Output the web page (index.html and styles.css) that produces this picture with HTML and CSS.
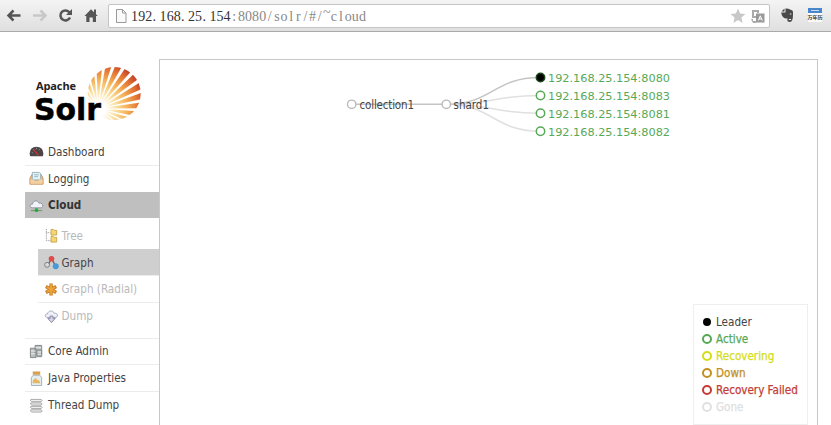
FILE: index.html
```html
<!DOCTYPE html>
<html lang="en">
<head>
<meta charset="utf-8">
<title>Solr Admin</title>
<link rel="stylesheet" href="styles.css">
</head>
<body>
<header class="toolbar">
  <svg class="nav" width="100" height="31" viewBox="0 0 100 31" fill="none" stroke="#555" stroke-width="2.5">
    <path d="M20.500 15.500H9M13.500 10.500L8.500 15.500L13.500 20.500"/>
    <path stroke="#c8c8c8" d="M33 15.500H45M40.500 10.500L45.500 15.500L40.500 20.500"/>
    <path d="M69.500 12.500A5 5 0 1 0 70 17.500"/>
    <path fill="#555" stroke="none" d="M72 9v6h-6z"/>
    <path fill="#555" stroke="none" d="M84.500 16L91 9.300L94 12.300V9.500H96V14.300L97.800 16H96V22H92.800V17.500H89.500V22H86.300V16z"/>
  </svg>
  <div class="address">
    <svg width="12" height="16" viewBox="0 0 12 16" fill="#fafafa" stroke="#999"><path d="M1.500 1.500H7.500L11 5V14.500H1.500zM7.500 1.500V5H11"/></svg>
    <svg class="url" width="240" height="22" viewBox="0 0 240 22"><text y="16"><tspan class="domain" x="3.6 10.7 17.8 23.3 32 39.2 46.3 51.8 60.5 67.6 73.2 81.9 89 96.1">192.168.25.154</tspan><tspan x="103.2 110.4 117.5 124.6 131.7 138.8 146 153.1 160.2 167.3 174.4 181.6 188.7">:8080/solr/#/</tspan><tspan x="195.8" y="12">~</tspan><tspan y="16" x="202.9 210 217.2 224.3 231.4">cloud</tspan></text></svg>
    <svg class="tools" width="36" height="18" viewBox="0 0 36 18">
      <path fill="#c8c8c8" d="M8 1.500L10.100 6.500L15.500 7L11.400 10.600L12.600 16L8 13.100L3.400 16L4.600 10.600L.5 7L5.900 6.500z"/>
      <path fill="#aaa" d="M22 3h7v3h-2V5h-3v4h2v2h-4zM21 12h2v2h3v2h-3z"/>
      <rect x="26" y="6.500" width="8.500" height="9" fill="#999"/><path d="M28.300 13.500L30.300 8.800L32.300 13.500M29 12h2.600" fill="none" stroke="#fff"/>
    </svg>
  </div>
  <svg class="ext" width="50" height="31" viewBox="0 0 50 31">
    <path fill="#4a4a4a" d="M3.500 11.500L6.500 8.500V11.500zM7.500 8.500Q11 8 13 10Q15.500 9.800 15 14.500Q15 22 12 22Q8.500 22 9.500 18.500Q4 19 3.200 12.500H7.500z"/>
    <path d="M10.800 19.500h2.300M11.800 14h1.600" stroke="#eee"/>
    <rect x="30" y="8" width="14" height="14" fill="#fafafa"/><path fill="#4a86cc" d="M30 8h14v5H30z"/><path d="M33 10.500h8" stroke="#c4dcf4"/>
    <text x="29.500" y="19" class="calendar">万年历</text>
  </svg>
</header>
<div class="page">
  <aside>
    <svg class="logo" width="134" height="79" viewBox="25 59 134 79">
      <defs>
        <radialGradient id="sun" gradientUnits="userSpaceOnUse" cx="98" cy="109" r="51"><stop offset=".14" stop-color="#fff"/><stop offset=".35" stop-color="#fbe0a0"/><stop offset=".58" stop-color="#f4b057"/><stop offset=".8" stop-color="#e27232"/><stop offset="1" stop-color="#b93127"/></radialGradient>
        <clipPath id="disc"><circle cx="114.200" cy="93.500" r="26.500"/></clipPath>
      </defs>
      <g clip-path="url(#disc)"><circle cx="98" cy="108.500" r="30" fill="none" stroke="url(#sun)" stroke-width="60" pathLength="360" stroke-dasharray="7.700 4.300" transform="rotate(-8 98 108.500)"/></g>
      <text x="36" y="90" class="apache" textLength="40">Apache</text>
      <text x="34" y="119.500" class="solr" textLength="67" lengthAdjust="spacingAndGlyphs">Solr</text>
    </svg>
    <nav>
      <a class="row first"><svg viewBox="0 0 16 16"><path fill="#4b4547" d="M.7 10Q1 3 8 3T15.300 10Q15.300 13 14 13H2Q.7 13 .7 10z"/><path d="M3 9l1 .4M4.500 5.500l1 1M8 4v1.500M11.500 5.500l-1 1" stroke="#999"/><path d="M5 6l5 6" stroke="#d33030" stroke-width="1.300"/></svg>Dashboard</a>
      <a class="row"><svg viewBox="0 0 16 16"><path fill="#edc38e" stroke="#c28b58" d="M1 8L3 4H13L15 8V14H1z"/><path fill="#e6f1f5" stroke="#94adb8" d="M3.500 1.500H11L12.500 3V9.500H3.500z"/><path d="M5.500 4h5M5.500 6h4" stroke="#91b5bf"/><path fill="#f3d1a0" d="M1.500 9H5L6 11H10L11 9H14.500V13.500H1.500z"/></svg>Logging</a>
      <a class="row active"><svg viewBox="0 0 16 16"><path d="M8 8v6M2 13.500h12" stroke="#65965d"/><path fill="#f2f3f8" stroke="#8d91a0" d="M3.500 10.500C0 10 .8 6 3.600 6.600C4.500 2 10 2.200 10.600 5.500C15 4.500 16.300 9.800 12.600 10.500z"/><circle cx="8" cy="13" r="2" fill="#2da746"/></svg>Cloud</a>
      <div class="submenu">
        <a class="row"><svg viewBox="0 0 16 16"><path d="M2.500 1v12.500H7M2.500 5H7" fill="none" stroke="#888" stroke-dasharray="1 1"/><path fill="#f4d675" stroke="#c9a64a" d="M7.500 1.500H10L11 2.500H13.500V7.500H7.500zM7.500 9H10L11 10H13.500V15H7.500z"/></svg>Tree</a>
        <a class="row chosen"><svg viewBox="0 0 16 16"><path d="M4 11L8 4L12 11" fill="none" stroke="#666" stroke-width="1.500"/><circle cx="8" cy="4" r="3" fill="#dd4b4b"/><circle cx="3.300" cy="10.500" r="2.600" fill="#ddd" stroke="#777"/><circle cx="12.500" cy="12" r="3.200" fill="#459bd9"/></svg>Graph</a>
        <a class="row"><svg viewBox="0 0 16 16"><path d="M7.500 1.500v13M2 4.800l11 6.400M2 11.200l11-6.400" stroke="#c57b24" stroke-width="3.600"/><path d="M7.500 2.500v11M3 5.300l9 5.400M3 10.700l9-5.400" stroke="#f0a339" stroke-width="2"/></svg>Graph (Radial)</a>
        <a class="row"><svg viewBox="0 0 16 16"><path fill="#eeeff7" stroke="#a5a7bd" d="M3.500 9C.2 8.700 1 4.800 3.600 5.300C4.500 1.200 10 1.200 10.700 4.500C14.900 3.800 15.800 8.400 12.600 9z"/><path fill="#d4d6e8" stroke="#8588a5" d="M6.500 7.500h3V10H12L8 14.500L4 10h2.500z"/></svg>Dump</a>
      </div>
      <a class="row"><svg viewBox="0 0 16 16"><path fill="#b8bdbd" stroke="#7e8585" d="M6.500 1.500h7v10h-7zM1.500 4.500h6v10h-6zM8.500 6.500h5v7h-5z"/><path d="M2 7.500h5M2 10.500h5M7 4h6M9 8.500h4M9 11h4" stroke="#f1f3f3"/></svg>Core Admin</a>
      <a class="row"><svg viewBox="0 0 16 16"><path fill="#e4edf1" stroke="#9eafb7" d="M4.500 4.500h7L13.500 7V15.500h-11V7z"/><path fill="#d8a052" d="M4 .5h8v3.500H4z"/><path fill="#e8b65c" d="M4 13V10l3-2.500 2 2 2 .5 1 3z"/></svg>Java Properties</a>
      <a class="row"><svg viewBox="0 0 16 16"><g fill="#eee" stroke="#909090"><path d="M2 1.500h11l1 1.200-1 1.200H3L1.500 2.700zM2 5.200h11l1 1.200-1 1.200H3L1.500 6.400zM2 8.900h11l1 1.200-1 1.200H3L1.500 10.100zM2 12.600h11l1 1.200-1 1.200H3L1.500 13.800z" stroke-width=".8"/></g></svg>Thread Dump</a>
    </nav>
  </aside>
  <main>
    <svg class="graph" width="657" height="240" viewBox="160 60 657 240">
      <g fill="none" stroke="#e0e0e0" stroke-width="1.500">
        <path d="M446 104.300C493 104.300 493 95.500 540 95.500M446 104.300C493 104.300 493 113.300 540 113.300M446 104.300C493 104.300 493 131.200 540 131.200"/>
        <path stroke="#c4c4c4" d="M352 104.300H446M446 104.300C493 104.300 493 77.500 540 77.500"/>
      </g>
      <g fill="#fff" stroke="#bbb" stroke-width="1.400"><circle cx="351.700" cy="104.300" r="4.200"/><circle cx="446.300" cy="104.300" r="4.200"/></g>
      <g fill="#fff" stroke="#57a957" stroke-width="1.500"><circle cx="540.500" cy="77.500" r="4.200" fill="#000" stroke="#1c471c"/><circle cx="540.500" cy="95.500" r="4.200"/><circle cx="540.500" cy="113.300" r="4.200"/><circle cx="540.500" cy="131.200" r="4.200"/></g>
      <g class="name"><text x="359.500" y="108.500" textLength="54.500">collection1</text><text x="453.500" y="108.500" textLength="35.500">shard1</text></g>
      <g class="host"><text x="548" y="82" textLength="122">192.168.25.154:8080</text><text x="548" y="100" textLength="122">192.168.25.154:8083</text><text x="548" y="117.800" textLength="122">192.168.25.154:8081</text><text x="548" y="135.700" textLength="122">192.168.25.154:8082</text></g>
    </svg>
    <ul class="legend">
      <li class="leader"><i></i>Leader</li><li class="up"><i></i>Active</li><li class="recovering"><i></i>Recovering</li><li class="down"><i></i>Down</li><li class="failed"><i></i>Recovery Failed</li><li class="gone"><i></i>Gone</li>
    </ul>
  </main>
</div>
</body>
</html>
```
FILE: styles.css
```css
* { box-sizing: border-box; }
body { margin: 0; height: 425px; overflow: hidden; background: #fff; color: #444; font: 11.6px "DejaVu Sans Condensed", "DejaVu Sans", sans-serif; }
svg { display: block; flex: none; }
.toolbar { display: flex; height: 32px; background: linear-gradient(#f4f4f4, #dfdfdf); border-bottom: 1px solid #aaa; }
.address { display: flex; align-items: center; width: 662px; height: 24px; margin: 4px 0 0 8px; padding: 0 3px 0 6px; background: #fff; border: 1px solid #c4c4c4; border-radius: 2px; }
.url { margin-left: 4px; font: 14px "Liberation Serif", serif; fill: #888; text-anchor: middle; }
.url .domain { fill: #333; }
.tools { margin-left: auto; }
.ext { margin-left: 8px; }
.calendar { font: bold 5px "Noto Sans CJK SC", sans-serif; fill: #333; }
.page { display: flex; height: 393px; padding: 27px 0 0 25px; }
aside { width: 134px; }
.apache { font: bold 11px "Open Sans", sans-serif; fill: #222; }
.solr { font: bold 30px "DejaVu Sans", sans-serif; fill: #000; stroke: #000; stroke-width: .5px; }
.row { display: flex; align-items: center; gap: 4px; height: 26.800px; padding-left: 4px; border-top: 1px solid #ececec; white-space: nowrap; }
.row svg { width: 15px; height: 15px; }
.first { border-color: transparent; }
.active { background: #bfbfbf; border-color: #bfbfbf; color: #333; font-weight: bold; }
.submenu { margin: 3.500px 0 8.500px 13px; color: #b9b9b9; }
.submenu .row { padding-left: 6px; gap: 2.500px; }
.submenu .row:first-child { border-color: transparent; }
.submenu .chosen { background: #cfcfcf; border-color: #cfcfcf; color: #444; }
main { display: flex; flex-direction: column; width: 659px; height: 366px; border: solid #c8c8c8; border-width: 1px 1px 0; }
.name { font: 11.500px "DejaVu Sans Condensed", "DejaVu Sans", sans-serif; fill: #444; }
.host { font: 11.300px "DejaVu Sans", sans-serif; fill: #57a957; }
.legend { display: flex; flex-direction: column; width: 115px; height: 121px; margin: 4px 9px 0 auto; padding: 8px 0 0 8px; list-style: none; border: 1px solid #eee; }
.legend li { display: flex; align-items: center; gap: 4px; height: 17px; white-space: nowrap; -webkit-text-stroke: .25px currentColor; }
.legend i { width: 10px; height: 10px; border: 2px solid currentColor; border-radius: 50%; }
.legend .leader { -webkit-text-stroke: 0; }
.legend .leader i { width: 8px; height: 8px; margin: 0 1px; background: #000; border-color: #000; }
.up { color: #57a957; }
.recovering { color: #d5dd18; }
.down { color: #c48f22; }
.failed { color: #c43c35; }
.gone { color: #e0e0e0; }
```
